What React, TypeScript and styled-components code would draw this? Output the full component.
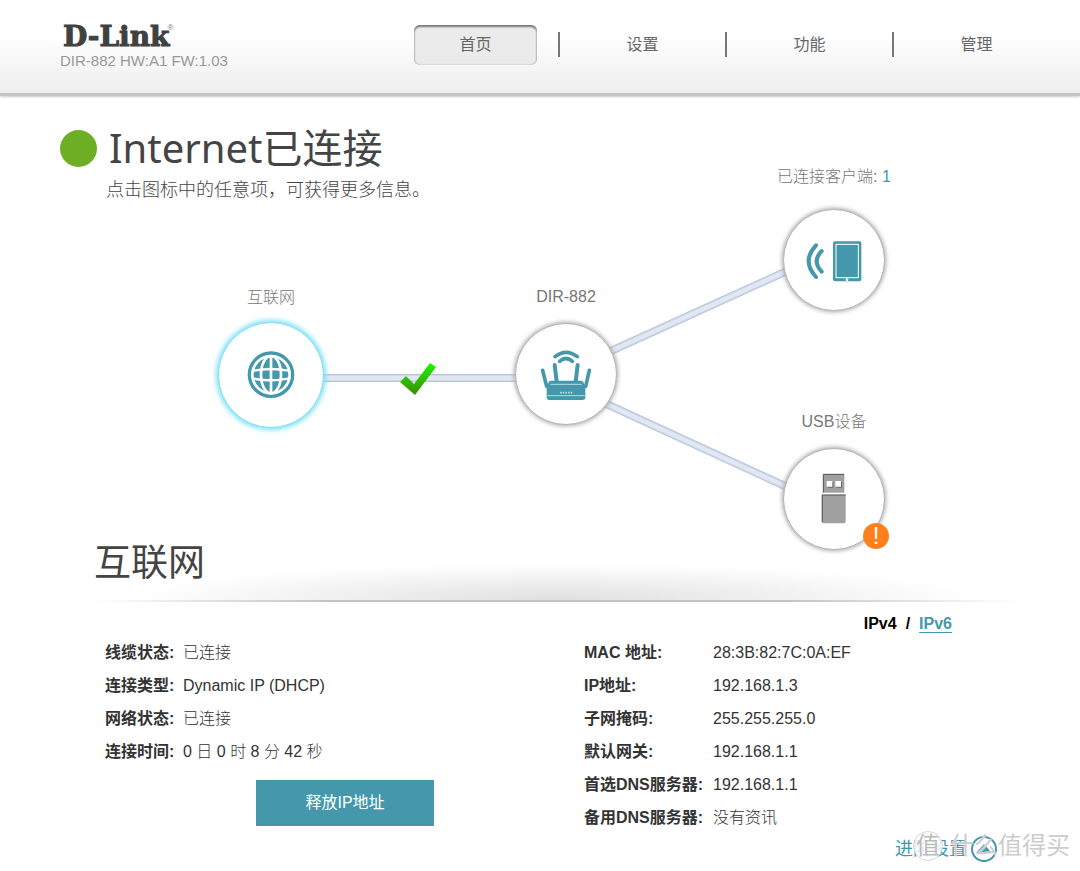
import React from "react";
import styled, { createGlobalStyle, css } from "styled-components";

const teal = "#4598ab";
const sans = '"Liberation Sans", "Noto Sans CJK SC", sans-serif';
const display = '"Noto Sans", "Noto Sans CJK SC", sans-serif';

const GlobalStyle = createGlobalStyle`
  *, *::before, *::after { box-sizing: border-box; }
  body { margin: 0; background: #fff; color: #333; font: 16px/24px ${sans}; }
  button { font: inherit; cursor: pointer; }
`;

const Header = styled.header`
  display: flex;
  justify-content: space-between;
  align-items: flex-start;
  height: 96px;
  padding: 24px 42px 0 60px;
  background: linear-gradient(#fff 0, #fff 34px, #eee 100%);
  border-bottom: 3px solid #c4c4c4;
  box-shadow: 0 1px 2px #ccc;
`;

const Brand = styled.div`
  display: flex;
  flex-direction: column;
`;

const Logo = styled.a`
  display: flex;
  padding-left: 3px;
  color: #3f4040;
  font: bold 28px/25px "DejaVu Serif", serif;
  -webkit-text-stroke: 1px #3f4040;
  text-decoration: none;
`;

const Registered = styled.sup`
  margin-left: -2px;
  font: 8px/8px ${sans};
  color: #777;
  -webkit-text-stroke: 0;
`;

const Model = styled.span`
  color: #999;
  font-size: 15px;
  line-height: 24px;
`;

const Nav = styled.nav`
  display: flex;
  gap: 44px;
  padding-top: 1px;
`;

const NavItem = styled.button<{ $active?: boolean }>`
  position: relative;
  width: 123px;
  height: 40px;
  padding: 0;
  border: 0;
  border-radius: 6px;
  background: transparent;
  color: #666;

  &:not(:first-child)::before {
    content: "";
    position: absolute;
    left: -23px;
    top: 7px;
    width: 2px;
    height: 25px;
    background: #777;
  }
  ${(p) =>
    p.$active &&
    css`
      background: #ebebeb;
      box-shadow: inset 0 2px 2px #777, inset 0 0 2px #aaa;
    `}
`;

const Main = styled.main`
  max-width: 960px;
  margin: 0 auto;
`;

const Stage = styled.section`
  position: relative;
  height: 444px;
  padding-top: 24px;
`;

const StatusRow = styled.div`
  display: flex;
  align-items: center;
  gap: 12px;
  height: 56px;
`;

const StatusDot = styled.span`
  width: 37px;
  height: 37px;
  border-radius: 50%;
  background: #6dae25;
`;

const Title = styled.h1`
  margin: 0;
  color: #444;
  font: 400 40px/56px ${display};
`;

const Hint = styled.p`
  margin: 0;
  padding-left: 46px;
  color: #444;
  font-weight: 300;
  font-size: 18px;
  line-height: 28px;
`;

const Links = styled.svg`
  position: absolute;
  left: 0;
  top: 0;
  pointer-events: none;
`;

const Node = styled.div<{ $x: number; $y: number }>`
  position: absolute;
  left: ${(p) => p.$x}px;
  top: ${(p) => p.$y}px;
  width: 102px;
`;

const NodeLabel = styled.div<{ $raised?: boolean }>`
  position: absolute;
  bottom: ${(p) => (p.$raised ? 122 : 116)}px;
  left: 50%;
  transform: translateX(-50%);
  color: #777;
  font-weight: 300;
  white-space: nowrap;
  b { color: ${teal}; font-weight: normal; }
`;

const NodeButton = styled.button<{ $active?: boolean }>`
  display: flex;
  align-items: center;
  justify-content: center;
  width: 102px;
  height: 102px;
  padding: 0;
  border: 1px solid #b4b4b4;
  border-radius: 50%;
  background: #fff;
  box-shadow: 0 0 4px 1px #aaa;
  svg { flex: none; }
  ${(p) =>
    p.$active &&
    css`
      width: 106px;
      height: 106px;
      margin: -2px;
      border-color: #7fe0f5;
      box-shadow: 0 0 5px 2px #7fe0f5;
    `}
`;

const Alert = styled.span`
  position: absolute;
  left: 80px;
  top: 75px;
  width: 26px;
  height: 26px;
  border-radius: 50%;
  background: #ff7f1e;
  color: #fff;
  font: 24px/25px ${sans};
  text-align: center;
`;

const Panel = styled.section`
  padding-left: 34px;
`;

const PanelHead = styled.div`
  height: 60px;
  background: radial-gradient(ellipse 46% 36px at 50% 100%, #e0e0e0, #fff);
`;

const PanelTitle = styled.h2`
  margin: 0;
  color: #444;
  font: 400 37px/44px ${display};
`;

const Rule = styled.div`
  height: 2px;
  background: linear-gradient(90deg, #fff, #c4c4c4 25%, #c4c4c4 75%, #fff);
`;

const Columns = styled.div`
  display: flex;
  padding-left: 11px;
`;

const Left = styled.div`
  flex: 1;
  padding-top: 34px;
`;

const Right = styled.div`
  flex: 0 0 436px;
  padding-top: 10px;
`;

const Tabs = styled.div`
  display: flex;
  justify-content: flex-end;
  gap: 9px;
  padding-right: 68px;
  color: #000;
  a { color: ${teal}; font-weight: bold; text-underline-offset: 3px; }
`;

const Facts = styled.table<{ $label: number }>`
  border-collapse: collapse;
  th, td { height: 33px; padding: 0; text-align: left; white-space: nowrap; }
  th { width: ${(p) => p.$label}px; }
  td { font-weight: 300; }
`;

const Release = styled.button`
  display: block;
  width: 178px;
  height: 46px;
  margin: 12px 0 0 151px;
  border: 0;
  background: ${teal};
  color: #fff;
`;

const Footer = styled.footer`
  position: relative;
  display: flex;
  justify-content: flex-end;
  padding-right: 23px;
`;

const Advanced = styled.a`
  display: flex;
  align-items: center;
  gap: 4px;
  height: 30px;
  color: ${teal};
  font-size: 18px;
  text-decoration: none;
`;

const Watermark = styled.div`
  position: absolute;
  right: -50px;
  top: -3px;
  display: flex;
  align-items: center;
  gap: 7px;
  color: #ccc;
  font-size: 24px;
  line-height: 30px;
  text-shadow: 0 0 1px #fff;
  pointer-events: none;
`;

const Seal = styled.span`
  width: 30px;
  height: 30px;
  border: 1px solid #d4d4d4;
  border-radius: 50%;
  background: #ffffffcc;
  color: #bbb;
  line-height: 27px;
  text-align: center;
`;

const Pipe = ({ d }: { d: string }) => (
  <g fill="none">
    <path d={d} stroke="#b9c7dd" strokeWidth="8" />
    <path d={d} stroke="#ced8e8" strokeWidth="6" />
    <path d={d} stroke="#e2e8f2" strokeWidth="4" />
  </g>
);

const Globe = () => (
  <svg width="100" height="100" viewBox="64 135 300 300" fill="none" stroke="#fff" strokeWidth="8">
    <circle cx="214" cy="284" r="65" stroke={teal} strokeWidth="10" />
    <circle cx="214" cy="284" r="52" fill={teal} stroke="none" />
    <ellipse cx="214" cy="284" rx="30" ry="56" />
    <path d="M214 230v108" />
    <path d="M162 272Q214 262 266 272M162 296Q214 306 266 296" strokeWidth="7" />
  </svg>
);

const Router = () => (
  <svg width="100" height="100" viewBox="49 133 300 300" fill="none" stroke={teal} strokeWidth="11" strokeLinecap="round">
    <path d="M166 231Q199 205 233 231M180 245Q199 228 218 245" />
    <path d="M165 256l6 50M234 256l-6 50" strokeWidth="12" />
    <path d="M129 272l12 48M269 272l-11 48" />
    <path d="M154 303h90q6 0 8 6l5 16v28q0 8-8 8h-100q-8 0-8-8v-28l5-16q2-6 8-6z" fill={teal} stroke="none" />
    <path d="M152 314h94M143 348h112" stroke="#b9dbe2" strokeWidth="3" strokeLinecap="butt" />
    <path d="M181 339h37" stroke="#b9dbe2" strokeWidth="5" strokeDasharray="5 3" strokeLinecap="butt" />
  </svg>
);

const Tablet = () => (
  <svg width="100" height="100" viewBox="73 149 300 300" fill="none" stroke={teal} strokeLinecap="round">
    <path d="M169 255Q125 302 169 350M186 272Q156 303 186 334" strokeWidth="12" />
    <rect x="220" y="243" width="85" height="120" rx="6" fill={teal} stroke="none" />
    <rect x="229" y="252" width="67" height="100" stroke="#fff" strokeWidth="3" />
    <circle cx="262" cy="358" r="4" fill="#fff" stroke="none" />
  </svg>
);

const Usb = () => (
  <svg width="100" height="100" viewBox="73 149 300 300">
    <path d="M190 224h64v56h-64z" fill="#a0a0a0" />
    <path d="M191 280v-55h62" fill="none" stroke="#555" strokeWidth="3" />
    <path d="M204 248h17v17h-17zM230 248h17v17h-17z" fill="#666" />
    <path d="M201 245h17v17h-17zM227 245h17v17h-17z" fill="#fff" />
    <path d="M186 286h72v78q0 8-8 8h-56q-8 0-8-8z" fill="#a0a0a0" />
    <path d="M188 368v-81h70" fill="none" stroke="#555" strokeWidth="3" />
  </svg>
);

const Check = () => (
  <>
    <defs>
      <linearGradient id="check" x1="0" y1="0" x2="0" y2="1">
        <stop offset="0" stopColor="#1df500" />
        <stop offset="1" stopColor="#3d8c00" />
      </linearGradient>
    </defs>
    <path d="M340 286L346 280L354 288L370 267L376 271L355 299Z" fill="url(#check)" />
  </>
);

const lineFacts = [
  ["线缆状态:", "已连接"],
  ["连接类型:", "Dynamic IP (DHCP)"],
  ["网络状态:", "已连接"],
  ["连接时间:", "0 日 0 时 8 分 42 秒"],
];

const addressFacts = [
  ["MAC 地址:", "28:3B:82:7C:0A:EF"],
  ["IP地址:", "192.168.1.3"],
  ["子网掩码:", "255.255.255.0"],
  ["默认网关:", "192.168.1.1"],
  ["首选DNS服务器:", "192.168.1.1"],
  ["备用DNS服务器:", "没有资讯"],
];

const FactTable = ({ rows, label }: { rows: string[][]; label: number }) => (
  <Facts $label={label}>
    <tbody>
      {rows.map(([name, value]) => (
        <tr key={name}>
          <th scope="row">{name}</th>
          <td>{value}</td>
        </tr>
      ))}
    </tbody>
  </Facts>
);

export default function App() {
  return (
    <>
      <GlobalStyle />
      <Header>
        <Brand>
          <Logo href="#home">D-Link<Registered>®</Registered></Logo>
          <Model>DIR-882 HW:A1 FW:1.03</Model>
        </Brand>
        <Nav>
          <NavItem $active>首页</NavItem>
          <NavItem>设置</NavItem>
          <NavItem>功能</NavItem>
          <NavItem>管理</NavItem>
        </Nav>
      </Header>
      <Main>
        <Stage>
          <StatusRow>
            <StatusDot />
            <Title>Internet已连接</Title>
          </StatusRow>
          <Hint>点击图标中的任意项，可获得更多信息。</Hint>
          <Links width="960" height="444" viewBox="0 0 960 444">
            <Pipe d="M260 282H470" />
            <Pipe d="M540 260L740 169" />
            <Pipe d="M540 305L740 397" />
            <Check />
          </Links>
          <Node $x={160} $y={228}>
            <NodeLabel>互联网</NodeLabel>
            <NodeButton $active aria-label="互联网"><Globe /></NodeButton>
          </Node>
          <Node $x={455} $y={227}>
            <NodeLabel>DIR-882</NodeLabel>
            <NodeButton aria-label="DIR-882"><Router /></NodeButton>
          </Node>
          <Node $x={723} $y={113}>
            <NodeLabel $raised>已连接客户端: <b>1</b></NodeLabel>
            <NodeButton aria-label="已连接客户端"><Tablet /></NodeButton>
          </Node>
          <Node $x={723} $y={352}>
            <NodeLabel>USB设备</NodeLabel>
            <NodeButton aria-label="USB设备"><Usb /></NodeButton>
            <Alert>!</Alert>
          </Node>
        </Stage>
        <Panel>
          <PanelHead>
            <PanelTitle>互联网</PanelTitle>
          </PanelHead>
          <Rule />
          <Columns>
            <Left>
              <FactTable rows={lineFacts} label={78} />
              <Release>释放IP地址</Release>
            </Left>
            <Right>
              <Tabs>
                <b>IPv4</b>
                <b>/</b>
                <a href="#ipv6">IPv6</a>
              </Tabs>
              <FactTable rows={addressFacts} label={129} />
            </Right>
          </Columns>
        </Panel>
        <Footer>
          <Advanced href="#advanced">
            进阶设置
            <svg width="26" height="26" viewBox="0 0 26 26" fill="none" stroke={teal} strokeWidth="2">
              <circle cx="13" cy="13" r="12" />
              <path d="M5 17l8-9 8 9z" fill={teal} stroke="none" />
            </svg>
          </Advanced>
          <Watermark>
            <Seal>值</Seal>
            什么值得买
          </Watermark>
        </Footer>
      </Main>
    </>
  );
}
